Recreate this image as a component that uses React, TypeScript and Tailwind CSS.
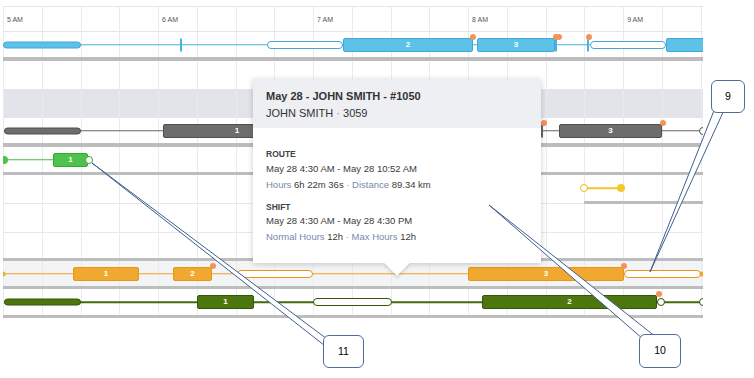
const X0 = 3;
const HOUR = 155.04;

type Kind = "line" | "pill" | "hollow" | "block" | "tick" | "dot" | "ring" | "knob" | "cap";

type Seg = { k: Kind; a: number; b?: number; label?: string };

type Tone = { fill: string; edge: string; line: string };

const blue: Tone = { fill: "bg-[#5ec2e8]", edge: "border-[#3ea9d9]", line: "bg-[#46b3e0]" };
const gray: Tone = { fill: "bg-[#6d6d6d]", edge: "border-[#4f4f4f]", line: "bg-[#666666]" };
const green: Tone = { fill: "bg-[#4dc24d]", edge: "border-[#37a837]", line: "bg-[#45b945]" };
const yellow: Tone = { fill: "bg-[#f2c82c]", edge: "border-[#e6b914]", line: "bg-[#efc52a]" };
const orange: Tone = { fill: "bg-[#f1a82f]", edge: "border-[#e9951c]", line: "bg-[#eea02a]" };
const olive: Tone = { fill: "bg-[#4b770e]", edge: "border-[#345608]", line: "bg-[#426b0c]" };

const blueSegs: Seg[] = [
  { k: "line", a: 3, b: 703 },
  { k: "pill", a: 3, b: 81 },
  { k: "tick", a: 181 },
  { k: "hollow", a: 267, b: 343 },
  { k: "block", a: 343, b: 473, label: "2" },
  { k: "block", a: 477, b: 555, label: "3" },
  { k: "tick", a: 556 },
  { k: "tick", a: 588 },
  { k: "hollow", a: 590, b: 666 },
  { k: "block", a: 666, b: 708 },
  { k: "dot", a: 473 },
  { k: "dot", a: 556 },
  { k: "dot", a: 559 },
  { k: "dot", a: 589 },
];

const graySegs: Seg[] = [
  { k: "line", a: 4, b: 703 },
  { k: "pill", a: 4, b: 81 },
  { k: "block", a: 163, b: 311, label: "1" },
  { k: "tick", a: 542 },
  { k: "block", a: 559, b: 662, label: "3" },
  { k: "ring", a: 703 },
  { k: "dot", a: 544 },
  { k: "dot", a: 663 },
];

const greenSegs: Seg[] = [
  { k: "line", a: 4, b: 53 },
  { k: "knob", a: 4 },
  { k: "block", a: 53, b: 88, label: "1" },
  { k: "ring", a: 89 },
];

const yellowSegs: Seg[] = [
  { k: "line", a: 584, b: 621 },
  { k: "ring", a: 584 },
  { k: "knob", a: 621 },
];

const orangeSegs: Seg[] = [
  { k: "line", a: 3, b: 703 },
  { k: "cap", a: 3 },
  { k: "block", a: 73, b: 139, label: "1" },
  { k: "block", a: 173, b: 212, label: "2" },
  { k: "hollow", a: 237, b: 313 },
  { k: "block", a: 468, b: 624, label: "3" },
  { k: "hollow", a: 624, b: 701 },
  { k: "cap", a: 702 },
  { k: "dot", a: 213 },
  { k: "dot", a: 624 },
];

const oliveSegs: Seg[] = [
  { k: "line", a: 4, b: 703 },
  { k: "pill", a: 4, b: 81 },
  { k: "block", a: 197, b: 254, label: "1" },
  { k: "hollow", a: 313, b: 392 },
  { k: "ring", a: 661 },
  { k: "block", a: 482, b: 657, label: "2" },
  { k: "ring", a: 703 },
  { k: "dot", a: 659 },
];

function Segment({ s, t }: { s: Seg; t: Tone }) {
  const left = s.a - X0;
  const width = (s.b ?? s.a) - s.a;
  switch (s.k) {
    case "line":
      return <div className={`absolute top-1/2 h-[1.5px] -translate-y-1/2 ${t.line}`} style={{ left, width }} />;
    case "pill":
      return <div className={`absolute top-1/2 h-[7px] -translate-y-1/2 rounded-full border ${t.fill} ${t.edge}`} style={{ left, width }} />;
    case "hollow":
      return <div className={`absolute top-1/2 h-[8px] -translate-y-1/2 rounded-full border-[1.5px] bg-white ${t.edge}`} style={{ left, width }} />;
    case "block":
      return (
        <div
          className={`absolute top-1/2 flex h-[14px] -translate-y-1/2 items-center justify-center rounded-[2px] border text-[8px] leading-none font-bold text-white ${t.fill} ${t.edge}`}
          style={{ left, width }}
        >
          {s.label}
        </div>
      );
    case "tick":
      return <div className={`absolute top-1/2 h-[13px] w-[2px] -translate-x-1/2 -translate-y-1/2 ${t.line}`} style={{ left }} />;
    case "dot":
      return <div className="absolute top-[calc(50%-11px)] h-[6px] w-[6px] -translate-x-1/2 rounded-full bg-[#f5925a]" style={{ left }} />;
    case "ring":
      return <div className={`absolute top-1/2 h-[8px] w-[8px] -translate-x-1/2 -translate-y-1/2 rounded-full border-[1.5px] bg-white ${t.edge}`} style={{ left }} />;
    case "knob":
      return <div className={`absolute top-1/2 h-[8px] w-[8px] -translate-x-1/2 -translate-y-1/2 rounded-full ${t.fill}`} style={{ left }} />;
    case "cap":
      return <div className={`absolute top-1/2 h-[5px] w-[5px] -translate-x-1/2 -translate-y-1/2 rounded-full ${t.fill}`} style={{ left }} />;
  }
}

function Track({ segs, tone, h }: { segs: Seg[]; tone: Tone; h: string }) {
  return (
    <div className={`relative ${h}`}>
      {segs.map((s, i) => (
        <Segment key={i} s={s} t={tone} />
      ))}
    </div>
  );
}

const Bar = ({ h = "h-[3px]" }: { h?: string }) => <div className={`relative ${h} bg-[#bdbdbd]`} />;

const Label = ({ children }: { children: React.ReactNode }) => (
  <span className="text-[#7b87a9]">{children}</span>
);

const Callout = ({ text, pos }: { text: string; pos: string }) => (
  <div className={`absolute z-40 flex items-center justify-center rounded-[6px] border border-[#4d6e9b] bg-white text-[10.5px] text-black ${pos}`}>
    {text}
  </div>
);

export default function App() {
  return (
    <div className="relative h-[378px] w-[754px] overflow-hidden bg-white font-['Liberation_Sans',Arial,sans-serif]">
      <div className="relative ml-[3px] mt-[6px] w-[700px] overflow-hidden">
        <div className="pointer-events-none absolute inset-0 grid grid-cols-[repeat(19,38.76px)]">
          {Array.from({ length: 19 }, (_, i) => (
            <div key={i} className="border-l border-[#ebebed]" />
          ))}
        </div>

        <div className="relative h-[26px] border-y border-[#e6e6e8]">
          {["5 AM", "6 AM", "7 AM", "8 AM", "9 AM"].map((t, i) => (
            <span key={t} className="absolute top-[9px] text-[7px] leading-none text-[#555]" style={{ left: i * HOUR + 4 }}>
              {t}
            </span>
          ))}
        </div>

        <Track segs={blueSegs} tone={blue} h="h-[25px]" />
        <Bar h="h-[4px]" />

        <div className="h-[28px]" />
        <div className="h-[29px] bg-[#e3e4e9]" />

        <Track segs={graySegs} tone={gray} h="h-[25px]" />
        <Bar h="h-[4px]" />

        <Track segs={greenSegs} tone={green} h="h-[25px]" />
        <Bar />

        <Track segs={yellowSegs} tone={yellow} h="h-[26px]" />
        <div className="flex h-[3px]">
          <div className="w-[581px] border-b border-[#e8e8ea]" />
          <div className="relative flex-1 bg-[#bdbdbd]" />
        </div>

        <div className="h-[29px] border-b border-[#e8e8ea]" />
        <div className="h-[25px]" />
        <Bar />

        <div className="bg-[#f3f4f6]">
          <Track segs={orangeSegs} tone={orange} h="h-[25px]" />
        </div>
        <Bar />

        <Track segs={oliveSegs} tone={olive} h="h-[26px]" />
        <Bar />
      </div>

      <div className="absolute left-[253px] top-[79px] z-20 h-[184px] w-[288px] bg-white text-[#3a3a3a] shadow-[0_1px_6px_rgba(0,0,0,0.2)]">
        <div className="absolute bottom-[-9px] left-[135px] -z-10 h-[18px] w-[18px] rotate-45 bg-white shadow-[2px_2px_3px_rgba(0,0,0,0.12)]" />
        <div className="h-[49px] bg-[#eeeff2] px-[13px] pt-[10px]">
          <div className="text-[11px] leading-[14px] font-bold text-[#333]">May 28 - JOHN SMITH - #1050</div>
          <div className="mt-[3px] text-[11px] leading-[14px] text-[#333]">
            JOHN SMITH <span className="text-[#888]">·</span> 3059
          </div>
        </div>
        <div className="px-[13px] pt-[20px]">
          <div className="text-[8.5px] leading-[12px] font-bold text-[#444]">ROUTE</div>
          <div className="mt-[1px] text-[9.5px] leading-[16px]">May 28 4:30 AM - May 28 10:52 AM</div>
          <div className="text-[9.5px] leading-[16px]">
            <Label>Hours</Label> 6h 22m 36s <span className="text-[#999]">·</span> <Label>Distance</Label> 89.34 km
          </div>
          <div className="mt-[8px] text-[8.5px] leading-[12px] font-bold text-[#444]">SHIFT</div>
          <div className="text-[9.5px] leading-[16px]">May 28 4:30 AM - May 28 4:30 PM</div>
          <div className="text-[9.5px] leading-[15px]">
            <Label>Normal Hours</Label> 12h <span className="text-[#999]">·</span> <Label>Max Hours</Label> 12h
          </div>
        </div>
      </div>

      <svg className="pointer-events-none absolute inset-0 z-30" width="754" height="378">
        <g fill="#fff" stroke="#3f5f8f" strokeWidth="1" strokeLinejoin="round">
          <polygon points="715,108 725,108 650,272" />
          <polygon points="643,339 656,337 489,205" />
          <polygon points="327,339 329,349 92,163" />
        </g>
      </svg>

      <Callout text="9" pos="left-[711px] top-[80px] h-[33px] w-[34px]" />
      <Callout text="10" pos="left-[639px] top-[334px] h-[34px] w-[42px]" />
      <Callout text="11" pos="left-[323px] top-[335px] h-[33px] w-[41px]" />
    </div>
  );
}
